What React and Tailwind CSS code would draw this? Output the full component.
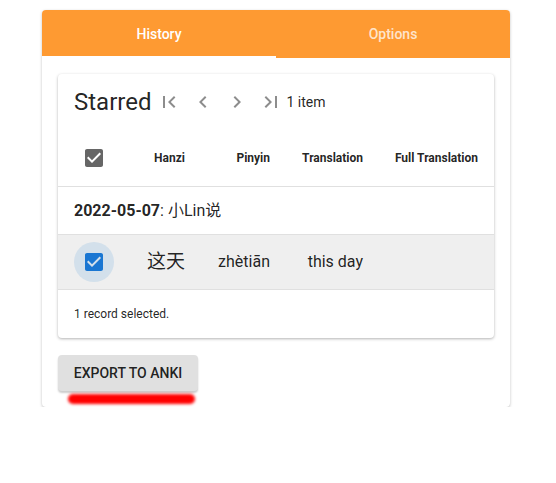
import { useState } from "react";

const CHECKBOX =
  "M19 3H5c-1.11 0-2 .9-2 2v14c0 1.1.89 2 2 2h14c1.11 0 2-.9 2-2V5c0-1.1-.89-2-2-2zm-9 14l-5-5 1.41-1.41L10 14.17l7.59-7.59L19 8l-9 9z";

const PAGER = [
  "M18.41 16.59L13.82 12l4.59-4.59L17 6l-6 6 6 6zM6 6h2v12H6z",
  "M15.41 7.41L14 6l-6 6 6 6 1.41-1.41L10.83 12z",
  "M10 6L8.59 7.41 13.17 12l-4.58 4.59L10 18l6-6z",
  "M5.59 7.41L10.18 12l-4.59 4.59L7 18l6-6-6-6zM16 6h2v12h-2z",
];

function Icon({ d, className }) {
  return (
    <svg viewBox="0 0 24 24" className={className} fill="currentColor">
      <path d={d} />
    </svg>
  );
}

export default function App() {
  const [tab, setTab] = useState("History");

  return (
    <div
      className="pt-[10px] pl-[42px]"
      style={{ fontFamily: "Roboto, 'Noto Sans CJK SC', sans-serif" }}
    >
      <div className="w-[468px] bg-white rounded shadow-[0_1px_3px_rgba(0,0,0,0.25)] overflow-hidden">
        {/* TABS */}
        <div className="flex h-[48px] bg-[#fe9a32]">
          {["History", "Options"].map((t) => (
            <div
              key={t}
              onClick={() => setTab(t)}
              className={`relative flex-1 flex items-center justify-center text-sm font-medium cursor-pointer ${
                tab === t ? "text-white" : "text-white/75"
              }`}
            >
              {t}
              {tab === t && (
                <div className="absolute left-0 right-0 bottom-0 h-[2px] bg-white" />
              )}
            </div>
          ))}
        </div>

        {/* CONTENT */}
        <div className="p-4">
          <div className="bg-white rounded shadow-[0_1px_3px_rgba(0,0,0,0.3)] text-black/[0.87]">
            {/* TITLE */}
            <div className="h-[56px] flex items-center pl-4">
              <h2 className="text-[24px] leading-none">Starred</h2>
              <div className="flex ml-[6px] gap-[10px] text-[#8d8d8d]">
                {PAGER.map((d) => (
                  <Icon key={d} d={d} className="w-6 h-6" />
                ))}
              </div>
              <span className="ml-[3px] text-sm">1 item</span>
            </div>

            {/* HEADER */}
            <div className="h-[57px] flex items-center pl-4 border-b border-[#e0e0e0] text-xs font-bold">
              <div className="w-10 flex justify-center text-[#666]">
                <Icon d={CHECKBOX} className="w-6 h-6" />
              </div>
              <div className="w-[71px] text-right">Hanzi</div>
              <div className="w-[85px] text-right">Pinyin</div>
              <div className="w-[93px] text-right">Translation</div>
              <div className="w-[115px] text-right">Full Translation</div>
            </div>

            {/* GROUP */}
            <div className="h-[48px] flex items-center pl-4 border-b border-[#e0e0e0] text-base">
              <span className="font-bold">2022-05-07</span>
              <span>: 小Lin说</span>
            </div>

            {/* ROW */}
            <div className="h-[55px] flex items-center pl-4 border-b border-[#e0e0e0] bg-[#efefef] text-base">
              <div className="w-10 h-10 rounded-full bg-[#d3e0eb] flex items-center justify-center text-[#1976d2]">
                <Icon d={CHECKBOX} className="w-6 h-6" />
              </div>
              <div className="w-[71px] text-right text-[19px]">这天</div>
              <div className="w-[85px] text-right">zhètiān</div>
              <div className="w-[93px] text-right">this day</div>
              <div className="w-[115px]" />
            </div>

            {/* FOOTER */}
            <div className="h-[48px] flex items-center pl-4 text-xs">
              1 record selected.
            </div>
          </div>

          <div className="relative mt-[17px] w-[140px]">
            <button className="w-[140px] h-[36px] rounded bg-[#e0e0e0] shadow-[0_2px_2px_rgba(0,0,0,0.2)] text-sm font-medium uppercase text-black/[0.87]">
              Export to Anki
            </button>
            <div className="absolute left-[10px] top-[39px] w-[127px] h-[10px] rounded-full bg-[#ff0000] blur-[1.5px]" />
          </div>
        </div>
      </div>
    </div>
  );
}
